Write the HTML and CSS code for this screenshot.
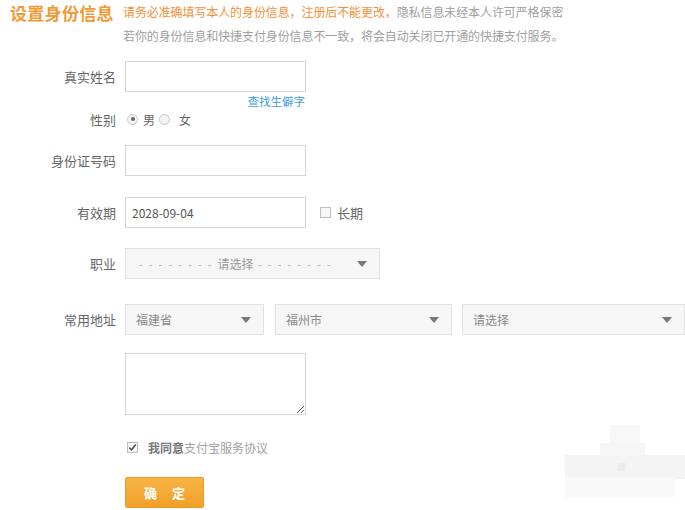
FILE: index.html
```html
<!DOCTYPE html>
<html lang="zh-CN">
<head>
<meta charset="utf-8">
<title>设置身份信息</title>
<link rel="stylesheet" href="styles.css">
</head>
<body>
<div class="page">
  <div class="header">
    <div class="title">设置身份信息</div>
    <div class="notice">
      <div class="line"><span class="warn">请务必准确填写本人的身份信息，注册后不能更改，</span>隐私信息未经本人许可严格保密</div>
      <div class="line">若你的身份信息和快捷支付身份信息不一致，将会自动关闭已开通的快捷支付服务。</div>
    </div>
  </div>

  <div class="row r-name">
    <label class="lbl">真实姓名</label>
    <input class="txt" type="text">
  </div>
  <div class="row r-link">
    <span class="lbl"></span>
    <a class="link">查找生僻字</a>
  </div>
  <div class="row r-sex">
    <label class="lbl">性别</label>
    <span class="radio on"></span><span class="opt male">男</span>
    <span class="radio"></span><span class="opt female">女</span>
  </div>
  <div class="row r-id">
    <label class="lbl">身份证号码</label>
    <input class="txt" type="text">
  </div>
  <div class="row r-date">
    <label class="lbl">有效期</label>
    <input class="txt date" type="text" value="2028-09-04">
    <span class="check"></span><span class="opt long">长期</span>
  </div>
  <div class="row r-job">
    <label class="lbl">职业</label>
    <div class="sel job"><span class="center"><span class="dash">- - - - - - - - </span>请选择<span class="dash"> - - - - - - - -</span></span><span class="arrow"></span></div>
  </div>
  <div class="row r-addr">
    <label class="lbl">常用地址</label>
    <div class="sel s1"><span>福建省</span><span class="arrow"></span></div>
    <div class="sel s2"><span>福州市</span><span class="arrow"></span></div>
    <div class="sel s3"><span>请选择</span><span class="arrow"></span></div>
  </div>
  <div class="row r-area">
    <span class="lbl"></span>
    <textarea class="area"></textarea>
  </div>
  <div class="row r-agree">
    <span class="lbl"></span>
    <span class="check on"><svg viewBox="0 0 10 10" width="9" height="9"><path d="M1.5 5.2 L4 7.6 L8.6 1.8" fill="none" stroke="#555" stroke-width="1.8"/></svg></span>
    <span class="agree"><b>我同意</b>支付宝服务协议</span>
  </div>
  <div class="row r-btn">
    <span class="lbl"></span>
    <button class="btn">确 定</button>
  </div>

  <div class="mosaic">
    <span class="m m1"></span><span class="m m2"></span><span class="m m3"></span><span class="m m4"></span><span class="m m5"></span>
  </div>
</div>
</body>
</html>
```

FILE: styles.css
```css
html, body {
  margin: 0;
  padding: 0;
  background: #fff;
}
body {
  font-family: "Noto Sans CJK SC", "Noto Sans", sans-serif;
  color: #666;
  width: 685px;
  height: 510px;
  overflow: hidden;
}
.page {
  position: relative;
  height: 510px;
}
.header {
  display: flex;
  align-items: flex-start;
  height: 48px;
}
.title {
  margin-left: 10px;
  width: 113px;
  font-size: 17px;
  font-weight: bold;
  color: #f09a36;
  line-height: 26px;
  letter-spacing: 0.3px;
}
.notice {
  font-size: 12px;
  line-height: 24px;
  color: #a0a0a0;
  letter-spacing: -0.1px;
}
.warn {
  color: #f3913a;
}
.row {
  display: flex;
  align-items: center;
}
.lbl {
  width: 116px;
  flex: none;
  text-align: right;
  font-size: 13px;
  color: #666;
  margin-right: 9px;
}
.txt {
  width: 181px;
  height: 31px;
  box-sizing: border-box;
  border: 1px solid #d6d6d6;
  margin: 0;
  padding: 0 6px;
  font-family: inherit;
  font-size: 12px;
  color: #555;
  background: #fff;
  outline: none;
}
.r-name { margin-top: 13px; }
.r-link { margin-top: 2px; height: 14px; }
.link {
  width: 180px;
  text-align: right;
  font-size: 11.5px;
  color: #3d9be6;
  line-height: 14px;
}
.r-sex { margin-top: 1px; height: 20px; }
.radio {
  width: 11px;
  height: 11px;
  box-sizing: border-box;
  border: 1px solid #c8c8c8;
  border-radius: 50%;
  background: #f4f4f4;
  margin-left: 2px;
  position: relative;
}
.radio.on::after {
  content: "";
  position: absolute;
  left: 2.5px;
  top: 2.5px;
  width: 4px;
  height: 4px;
  border-radius: 50%;
  background: #666;
}
.opt {
  font-size: 12px;
  color: #666;
  margin-left: 5px;
}
.male { margin-right: 2px; }
.female { margin-left: 9px; }
.r-id { margin-top: 16px; }
.r-date { margin-top: 21px; }
.check {
  width: 11px;
  height: 11px;
  box-sizing: border-box;
  border: 1px solid #bdbdbd;
  background: #f6f6f6;
  margin-left: 14px;
  display: flex;
  align-items: center;
  justify-content: center;
}
.long { margin-left: 6px; font-size: 13px; }
.r-job { margin-top: 20px; }
.sel {
  height: 31px;
  box-sizing: border-box;
  border: 1px solid #e2e2e2;
  background: #f6f6f6;
  display: flex;
  align-items: center;
  justify-content: space-between;
  padding: 0 12px 0 10px;
  font-size: 12px;
  color: #8a8a8a;
}
.arrow {
  width: 0;
  height: 0;
  border-left: 5px solid transparent;
  border-right: 5px solid transparent;
  border-top: 6px solid #777;
}
.job {
  width: 255px;
  position: relative;
  justify-content: flex-end;
}
.job .center {
  position: absolute;
  left: 10px;
  right: 44px;
  text-align: center;
  color: #999;
  white-space: nowrap;
}
.dash { color: #b8b8b8; letter-spacing: 1.5px; }
.r-addr { margin-top: 25px; }
.s1 { width: 139px; }
.s2 { width: 177px; margin-left: 11px; }
.s3 { width: 223px; margin-left: 10px; }
.r-area { margin-top: 18px; }
.area {
  width: 181px;
  height: 62px;
  box-sizing: border-box;
  border: 1px solid #d6d6d6;
  margin: 0;
  padding: 4px;
  font-family: inherit;
  resize: both;
  outline: none;
}
.r-agree { margin-top: 24px; height: 16px; }
.r-agree .check { margin-left: 2px; }
.agree {
  margin-left: 10px;
  font-size: 12px;
  color: #a0a0a0;
}
.agree b {
  color: #777;
  font-weight: bold;
}
.r-btn { margin-top: 22px; }
.btn {
  width: 79px;
  height: 31px;
  border: 1px solid #eb9a22;
  border-radius: 2px;
  background: linear-gradient(#f8b445, #f0a02a);
  color: #fff;
  font-family: inherit;
  font-size: 13px;
  font-weight: bold;
  letter-spacing: 6px;
  padding: 0 0 0 6px;
}
.mosaic {
  position: absolute;
  left: 560px;
  top: 425px;
  width: 125px;
  height: 80px;
}
.m { position: absolute; background: #f6f6f6; }
.m1 { left: 50px; top: 0; width: 30px; height: 20px; background: #f8f8f8; }
.m2 { left: 40px; top: 18px; width: 45px; height: 20px; }
.m3 { left: 5px; top: 30px; width: 120px; height: 24px; background: #f4f4f4; }
.m4 { left: 5px; top: 52px; width: 110px; height: 20px; background: #f8f8f8; }
.m5 { left: 58px; top: 38px; width: 8px; height: 8px; background: #ececec; }
```
